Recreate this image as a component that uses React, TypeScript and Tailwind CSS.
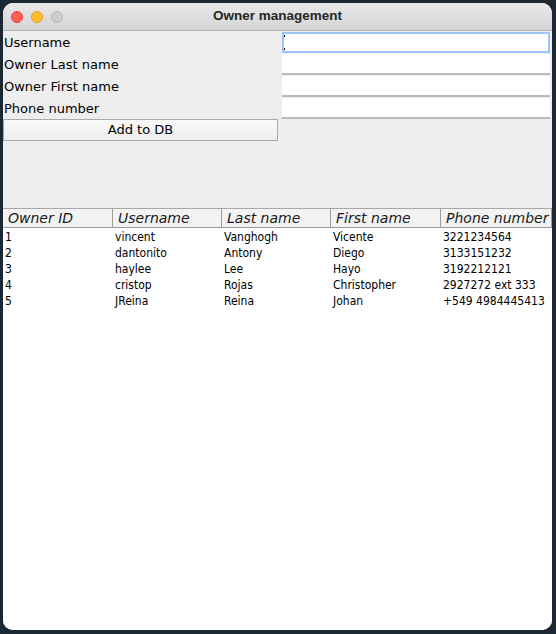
const owners = [
  { id: "1", user: "vincent", last: "Vanghogh", first: "Vicente", phone: "3221234564" },
  { id: "2", user: "dantonito", last: "Antony", first: "Diego", phone: "3133151232" },
  { id: "3", user: "haylee", last: "Lee", first: "Hayo", phone: "3192212121" },
  { id: "4", user: "cristop", last: "Rojas", first: "Christopher", phone: "2927272 ext 333" },
  { id: "5", user: "JReina", last: "Reina", first: "Johan", phone: "+549 4984445413" },
];

const fields = ["Username", "Owner Last name", "Owner First name", "Phone number"];
const cols = ["Owner ID", "Username", "Last name", "First name", "Phone number"];

function App() {
  return (
    <div className="w-[556px] h-[634px] bg-[#1b2833] p-[3px] pr-[4px] pb-[4px] font-['DejaVu_Sans',sans-serif]">
      <div className="h-full flex flex-col bg-[#eeeeee] rounded-[10px] overflow-hidden">
        <div className="h-[28px] shrink-0 relative flex items-center justify-center bg-gradient-to-b from-[#e9e9e9] to-[#d4d4d4] border-b border-[#b3b3b3]">
          <div className="absolute left-[8px] top-[8px] flex gap-[8px]">
            <div className="w-[12px] h-[12px] rounded-full bg-[#fe5f57] border border-[#e0443e]" />
            <div className="w-[12px] h-[12px] rounded-full bg-[#febc2e] border border-[#dea123]" />
            <div className="w-[12px] h-[12px] rounded-full bg-[#cdcdcd] border border-[#b8b8b8]" />
          </div>
          <p className="text-[13.5px] font-bold text-[#262626] font-['Liberation_Sans',sans-serif]">Owner management</p>
        </div>

        <div className="flex flex-col text-[13px] text-black">
          {fields.map((f, i) => (
            <div key={f} className="h-[22px] flex">
              <p className="w-[279px] leading-[24px] pl-[1px]">{f}</p>
              <div className={"flex-1 mr-[2px] bg-white " + (i === 0 ? "border-2 border-[#9cc6f5] mt-[1px] h-[21px]" : "mt-[1px] h-[21px] border-b-2 border-[#b9b9b9]")}>
                {i === 0 && (
                  <div className="flex flex-col justify-between w-[1px] h-[15px] mt-[1px]">
                    <div className="w-[1px] h-[2px] bg-black" />
                    <div className="w-[1px] h-[2px] bg-black" />
                  </div>
                )}
              </div>
            </div>
          ))}
          <div className="w-[275px] h-[22px] border border-[#aaaaaa] bg-gradient-to-b from-[#f9f9f9] to-[#eeeeee] flex items-center justify-center">
            Add to DB
          </div>
        </div>

        <div className="mt-[67px] flex-1 bg-white border-t border-[#a8a8a8] flex flex-col">
          <div className="grid grid-cols-[110px_109px_109px_110px_1fr] h-[19px] border-b border-[#9c9c9c] bg-[#f3f3f3] text-[14px] italic text-[#1a1a1a]">
            {cols.map((c) => (
              <div key={c} className="border-r border-[#9c9c9c] pl-[5px] leading-[19px] overflow-hidden whitespace-nowrap">{c}</div>
            ))}
          </div>
          <div className="pt-[1px] text-[12px] text-black font-['DejaVu_Sans_Condensed','DejaVu_Sans',sans-serif]">
            {owners.map((o) => (
              <div key={o.id} className="grid grid-cols-[110px_109px_109px_110px_1fr] h-[16px] leading-[16px]">
                <span className="pl-[2px]">{o.id}</span>
                <span className="pl-[2px]">{o.user}</span>
                <span className="pl-[2px]">{o.last}</span>
                <span className="pl-[2px]">{o.first}</span>
                <span className="pl-[2px] whitespace-nowrap">{o.phone}</span>
              </div>
            ))}
          </div>
        </div>
      </div>
    </div>
  );
}

export default App;
